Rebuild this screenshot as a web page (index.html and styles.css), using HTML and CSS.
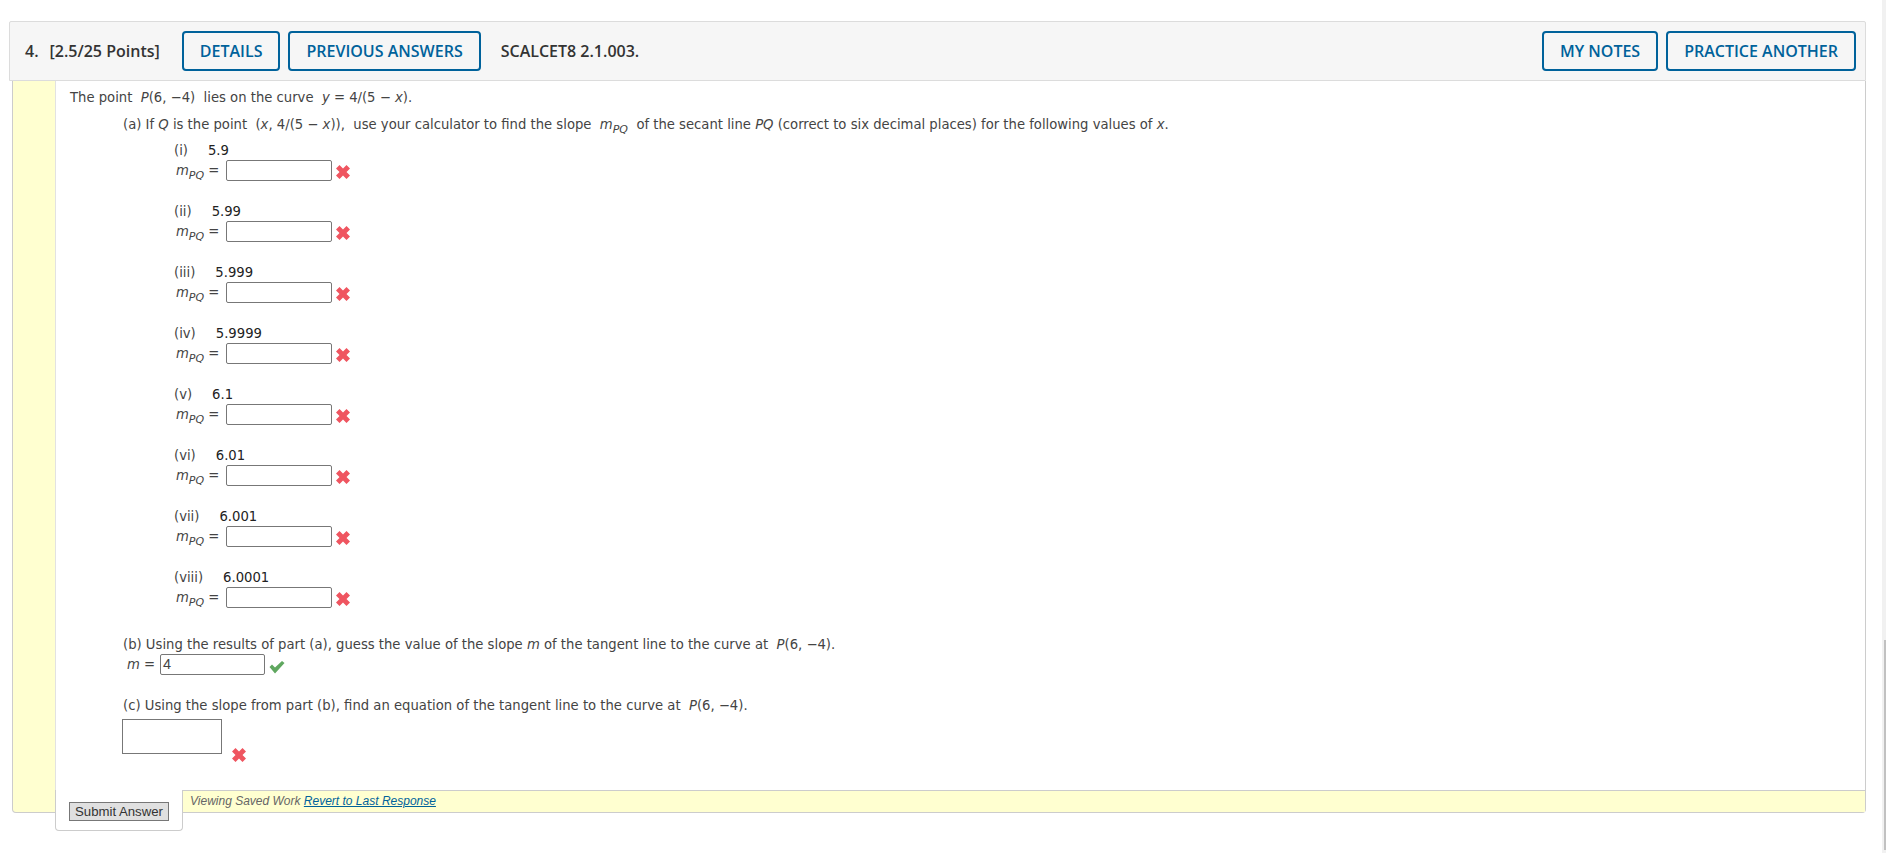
FILE: index.html
```html
<!DOCTYPE html>
<html lang="en">
<head>
<meta charset="utf-8">
<title>SCALCET8 2.1.003</title>
<link rel="stylesheet" href="styles.css">
</head>
<body>
<div class="app">
  <main class="main">
    <header class="head">
      <span class="qnum">4.</span>
      <span class="points">[2.5/25 Points]</span>
      <a class="btn">DETAILS</a>
      <a class="btn">PREVIOUS ANSWERS</a>
      <span class="code">SCALCET8 2.1.003.</span>
      <span class="spacer"></span>
      <a class="btn">MY NOTES</a>
      <a class="btn">PRACTICE ANOTHER</a>
    </header>
    <section class="panel">
      <div class="content">
        <p class="intro">The point&nbsp; <i>P</i>(6, −4)&nbsp; lies on the curve&nbsp; <i>y</i> = 4/(5 − <i>x</i>).</p>
        <p class="parta">(a) If <i>Q</i> is the point&nbsp; (<i>x</i>, 4/(5 − <i>x</i>)),&nbsp; use your calculator to find the slope&nbsp; <i>m<sub>PQ</sub></i>&nbsp; of the secant line <i>PQ</i> (correct to six decimal places) for the following values of <i>x</i>.</p>
        <div class="items">
          <div class="item"><div class="lbl">(i)<b>5.9</b></div><div class="ans"><span class="mpq"><i>m<sub>PQ</sub></i> =</span><span class="box"></span><svg class="x" viewBox="0 0 16 16"><path d="M1 4.5 4.5 1 8 4.5 11.5 1 15 4.5 11.5 8 15 11.5 11.5 15 8 11.5 4.5 15 1 11.5 4.5 8Z"/></svg></div></div>
          <div class="item"><div class="lbl">(ii)<b>5.99</b></div><div class="ans"><span class="mpq"><i>m<sub>PQ</sub></i> =</span><span class="box"></span><svg class="x" viewBox="0 0 16 16"><path d="M1 4.5 4.5 1 8 4.5 11.5 1 15 4.5 11.5 8 15 11.5 11.5 15 8 11.5 4.5 15 1 11.5 4.5 8Z"/></svg></div></div>
          <div class="item"><div class="lbl">(iii)<b>5.999</b></div><div class="ans"><span class="mpq"><i>m<sub>PQ</sub></i> =</span><span class="box"></span><svg class="x" viewBox="0 0 16 16"><path d="M1 4.5 4.5 1 8 4.5 11.5 1 15 4.5 11.5 8 15 11.5 11.5 15 8 11.5 4.5 15 1 11.5 4.5 8Z"/></svg></div></div>
          <div class="item"><div class="lbl">(iv)<b>5.9999</b></div><div class="ans"><span class="mpq"><i>m<sub>PQ</sub></i> =</span><span class="box"></span><svg class="x" viewBox="0 0 16 16"><path d="M1 4.5 4.5 1 8 4.5 11.5 1 15 4.5 11.5 8 15 11.5 11.5 15 8 11.5 4.5 15 1 11.5 4.5 8Z"/></svg></div></div>
          <div class="item"><div class="lbl">(v)<b>6.1</b></div><div class="ans"><span class="mpq"><i>m<sub>PQ</sub></i> =</span><span class="box"></span><svg class="x" viewBox="0 0 16 16"><path d="M1 4.5 4.5 1 8 4.5 11.5 1 15 4.5 11.5 8 15 11.5 11.5 15 8 11.5 4.5 15 1 11.5 4.5 8Z"/></svg></div></div>
          <div class="item"><div class="lbl">(vi)<b>6.01</b></div><div class="ans"><span class="mpq"><i>m<sub>PQ</sub></i> =</span><span class="box"></span><svg class="x" viewBox="0 0 16 16"><path d="M1 4.5 4.5 1 8 4.5 11.5 1 15 4.5 11.5 8 15 11.5 11.5 15 8 11.5 4.5 15 1 11.5 4.5 8Z"/></svg></div></div>
          <div class="item"><div class="lbl">(vii)<b>6.001</b></div><div class="ans"><span class="mpq"><i>m<sub>PQ</sub></i> =</span><span class="box"></span><svg class="x" viewBox="0 0 16 16"><path d="M1 4.5 4.5 1 8 4.5 11.5 1 15 4.5 11.5 8 15 11.5 11.5 15 8 11.5 4.5 15 1 11.5 4.5 8Z"/></svg></div></div>
          <div class="item"><div class="lbl">(viii)<b>6.0001</b></div><div class="ans"><span class="mpq"><i>m<sub>PQ</sub></i> =</span><span class="box"></span><svg class="x" viewBox="0 0 16 16"><path d="M1 4.5 4.5 1 8 4.5 11.5 1 15 4.5 11.5 8 15 11.5 11.5 15 8 11.5 4.5 15 1 11.5 4.5 8Z"/></svg></div></div>
        </div>
        <p class="partb">(b) Using the results of part (a), guess the value of the slope <i>m</i> of the tangent line to the curve at&nbsp; <i>P</i>(6, −4).</p>
        <div class="ansb"><span class="meq"><i>m</i> =</span><span class="box boxb">4</span><svg class="check" viewBox="0 0 16 16"><path d="M.5 8 3 5.5 6 8.5 13 2 15.5 4 6 14.5Z"/></svg></div>
        <p class="partc">(c) Using the slope from part (b), find an equation of the tangent line to the curve at&nbsp; <i>P</i>(6, −4).</p>
        <div class="ansc"><span class="box boxc"></span><svg class="x xc" viewBox="0 0 16 16"><path d="M1 4.5 4.5 1 8 4.5 11.5 1 15 4.5 11.5 8 15 11.5 11.5 15 8 11.5 4.5 15 1 11.5 4.5 8Z"/></svg></div>
        <footer class="foot">
          <div class="tab"><button class="submit" type="button">Submit Answer</button></div>
          <div class="saved"><i>Viewing Saved Work <a class="revert">Revert to Last Response</a></i></div>
        </footer>
      </div>
    </section>
  </main>
  <aside class="track"><div class="thumb"></div></aside>
</div>
</body>
</html>
```
FILE: styles.css
```css
* { box-sizing: border-box; }
html, body { margin: 0; height: 100%; overflow: hidden; background: #fff; }
body { font-family: "DejaVu Sans", Verdana, sans-serif; font-size: 13.2px; color: #444; }
.app { display: flex; height: 854px; }
.main { flex: 1; padding: 21px 16px 0 9px; min-width: 0; }
.track { width: 4px; height: 853px; background: #f1f1f1; padding-top: 640px; padding-left: 2px; }
.thumb { height: 210px; background: #c1c1c1; }

.head { display: flex; align-items: center; height: 60px; background: #f6f6f6; border: 1px solid #dcdcdc; border-radius: 2px 2px 0 0; padding: 0 9px 0 15px; font-family: "Open Sans", sans-serif; font-weight: 600; font-size: 16px; color: #333; }
.qnum { margin-right: 11px; }
.points { margin-right: 22px; }
.btn { display: flex; align-items: center; height: 40px; padding: 0 16px; border: 2px solid #00629b; border-radius: 4px; color: #00629b; background: #f6f6f6; margin-right: 8px; }
.btn:last-child { margin-right: 0; }
.code { margin-left: 12px; }
.spacer { flex: 1; }

.panel { margin-left: 3px; height: 732px; background: #ffffd0; border: 1px solid #ccc; border-top: 0; border-radius: 0 0 4px 4px; padding-left: 42px; }
.content { height: 100%; background: #fff; border-left: 1px solid #e2e2e2; display: flex; flex-direction: column; padding: 7px 0 0 14px; }
p { margin: 0; }
sub { font-size: 11px; line-height: 0; }
i { font-style: italic; }
.intro { height: 19px; line-height: 19px; }
.parta { margin: 8px 0 0 53px; line-height: 19px; height: 19px; }
.items { margin: 7px 0 0 104px; display: flex; flex-direction: column; gap: 21px; }
.item { height: 40px; }
.lbl { height: 19px; line-height: 19px; }
.lbl b { font-weight: 400; color: #222; margin-left: 20px; }
.ans { display: flex; align-items: center; height: 21px; }
.mpq { margin-left: 2px; width: 50px; }
.box { display: block; width: 106px; height: 21px; background: #fff; border: 1px solid #777; border-radius: 2px; }
.x { width: 16px; height: 16px; fill: #ef5560; margin-left: 3px; margin-top: 2px; }
.partb { margin: 27px 0 0 53px; line-height: 19px; height: 19px; }
.ansb { display: flex; align-items: center; height: 21px; margin: 0 0 0 53px; }
.meq { margin-left: 4px; width: 33px; }
.boxb { width: 105px; font-family: "Liberation Sans", sans-serif; font-size: 14.5px; line-height: 19px; padding-left: 2px; }
.check { width: 16px; height: 16px; fill: #5fa75f; margin-left: 4px; margin-top: 5px; }
.partc { margin: 21px 0 0 53px; line-height: 19px; height: 19px; }
.ansc { display: flex; margin: 4px 0 0 52px; height: 36px; }
.boxc { width: 100px; height: 35px; border-radius: 0; }
.xc { margin: 28px 0 0 9px; }
.foot { display: flex; margin: auto 0 -19px -15px; height: 41px; align-items: flex-start; }
.tab { width: 128px; height: 41px; background: #fff; border: 1px solid #ccc; border-top: 0; border-radius: 0 0 4px 4px; padding: 12px 0 0 13px; }
.submit { display: block; width: 100px; height: 19px; padding: 0; background: #e0e0e0; border: 1px solid #777; border-radius: 0; font-family: "Liberation Sans", sans-serif; font-size: 13.2px; line-height: 16px; color: #333; }
.saved { flex: 1; height: 22px; background: #ffffd0; border-top: 1px solid #ccc; padding: 2px 0 0 7px; font-family: "Liberation Sans", sans-serif; font-size: 12px; line-height: 16px; color: #666; }
.revert { color: #00629b; text-decoration: underline; }
```
